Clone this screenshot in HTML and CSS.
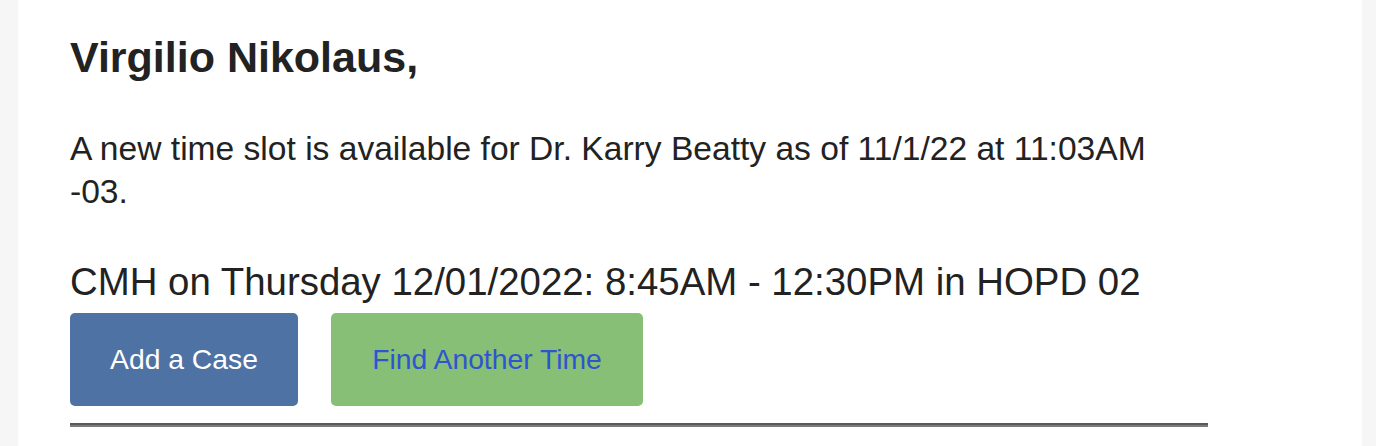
FILE: index.html
```html
<!DOCTYPE html>
<html lang="en">
<head>
<meta charset="utf-8">
<title>New time slot</title>
<link rel="stylesheet" href="styles.css">
</head>
<body>
<div class="page">
  <div class="card">
    <div class="content">
      <h1 class="greeting">Virgilio Nikolaus,</h1>
      <p class="message">A new time slot is available for Dr. Karry Beatty as of 11/1/22 at 11:03AM -03.</p>
      <p class="slot">CMH on Thursday 12/01/2022: 8:45AM - 12:30PM in HOPD 02</p>
      <div class="actions">
        <a class="btn btn-primary" href="#">Add a Case</a>
        <a class="btn btn-secondary" href="#">Find Another Time</a>
      </div>
      <hr class="divider">
    </div>
  </div>
</div>
</body>
</html>
```

FILE: styles.css
```css
html, body {
  margin: 0;
  padding: 0;
  height: 100%;
}
body {
  background: #f6f6f6;
  font-family: "Liberation Sans", Arial, Helvetica, sans-serif;
  color: #222222;
  overflow: hidden;
}
.page {
  padding: 0 14px 0 18px;
  height: 100%;
}
.card {
  background: #ffffff;
  height: 100%;
  padding: 33px 0 0 52px;
  box-sizing: border-box;
}
.content {
  width: 1138px;
}
.greeting {
  margin: 0;
  font-size: 43px;
  line-height: 48px;
  font-weight: bold;
  color: #222222;
}
.message {
  margin: 46px 0 0 0;
  font-size: 33.6px;
  line-height: 43px;
  max-width: 1110px;
}
.slot {
  margin: 47px 0 0 0;
  font-size: 38.4px;
  line-height: 44px;
}
.actions {
  display: flex;
  gap: 33px;
  margin-top: 9px;
}
.btn {
  display: flex;
  align-items: center;
  justify-content: center;
  height: 93px;
  padding: 0 39px;
  border-radius: 5px;
  font-size: 28.3px;
  text-decoration: none;
  box-sizing: border-box;
}
.btn-primary {
  background: #4f72a4;
  color: #ffffff;
  width: 228px;
}
.btn-secondary {
  background: #86bf75;
  color: #2f54d1;
  width: 312px;
}
.divider {
  margin: 17px 0 0 0;
  height: 0;
  border: 0;
  border-top: 2px solid #595959;
  border-bottom: 2px solid #7c7c7c;
}
```
